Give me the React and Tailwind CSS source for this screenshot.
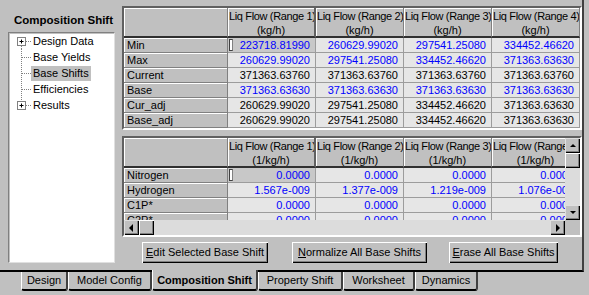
import React from 'react';

const topRows = [
  { label: 'Min', blue: true, focus: true, values: ['223718.81990', '260629.99020', '297541.25080', '334452.46620'] },
  { label: 'Max', blue: true, values: ['260629.99020', '297541.25080', '334452.46620', '371363.63630'] },
  { label: 'Current', blue: false, values: ['371363.63760', '371363.63760', '371363.63760', '371363.63760'] },
  { label: 'Base', blue: true, values: ['371363.63630', '371363.63630', '371363.63630', '371363.63630'] },
  { label: 'Cur_adj', blue: false, values: ['260629.99020', '297541.25080', '334452.46620', '371363.63630'] },
  { label: 'Base_adj', blue: false, values: ['260629.99020', '297541.25080', '334452.46620', '371363.63630'] },
];

const bottomRows = [
  { label: 'Nitrogen', blue: true, focus: true, values: ['0.0000', '0.0000', '0.0000', '0.0000'] },
  { label: 'Hydrogen', blue: true, values: ['1.567e-009', '1.377e-009', '1.219e-009', '1.076e-009'] },
  { label: 'C1P*', blue: true, values: ['0.0000', '0.0000', '0.0000', '0.0000'] },
  { label: 'C2P*', blue: true, values: ['0.0000', '0.0000', '0.0000', '0.0000'] },
];

const treeItems = [
  { label: 'Design Data', kind: 'first' },
  { label: 'Base Yields', kind: 'mid' },
  { label: 'Base Shifts', kind: 'mid', selected: true },
  { label: 'Efficiencies', kind: 'mid' },
  { label: 'Results', kind: 'last' },
];

const tabs = [
  { label: 'Design', w: 'w-[47px]' },
  { label: 'Model Config', w: 'w-[84px]' },
  { label: 'Composition Shift', w: 'w-[106px]', active: true },
  { label: 'Property Shift', w: 'w-[85px]' },
  { label: 'Worksheet', w: 'w-[72px]' },
  { label: 'Dynamics', w: 'w-[63px]' },
];

const TreeConnector = ({ kind }) => (
  <svg width="22" height="16" viewBox="0 0 22 16" className="shrink-0">
    <g stroke="#808080" strokeWidth="1" strokeDasharray="1 1" fill="none">
      {kind === 'first' && <line x1="12.5" y1="13" x2="12.5" y2="16" />}
      {kind === 'mid' && <line x1="12.5" y1="0" x2="12.5" y2="16" />}
      {kind === 'last' && <line x1="12.5" y1="0" x2="12.5" y2="4" />}
      {kind === 'mid'
        ? <line x1="13" y1="8.5" x2="22" y2="8.5" />
        : <line x1="17" y1="8.5" x2="22" y2="8.5" />}
    </g>
    {kind !== 'mid' && (
      <g>
        <rect x="8.5" y="4.5" width="8" height="8" fill="#fff" stroke="#808080" />
        <line x1="10.5" y1="8.5" x2="14.5" y2="8.5" stroke="#000" />
        <line x1="12.5" y1="6.5" x2="12.5" y2="10.5" stroke="#000" />
      </g>
    )}
  </svg>
);

const Arrow = ({ dir }) => {
  const pts = {
    up: '1,5 4,2 7,5',
    down: '1,2 4,5 7,2',
    left: '5,0 1,4 5,8',
    right: '2,0 6,4 2,8',
  }[dir];
  return (
    <svg width="8" height="8" viewBox="0 0 8 8">
      <polygon points={pts} fill="#000" />
    </svg>
  );
};

const ScrollBtn = ({ dir, className = '' }) => (
  <div className={`w-[15px] h-[15px] shrink-0 bg-[#c0c0c0] flex items-center justify-center shadow-[inset_1px_1px_0_#dfdfdf,inset_-1px_-1px_0_#000,inset_-2px_-2px_0_#808080] ${className}`}>
    <Arrow dir={dir} />
  </div>
);

const GridHeader = ({ unit }) => (
  <div className="flex h-[30px] shrink-0">
    <div className="w-[104px] shrink-0 bg-[#c0c0c0] border-r border-r-[#808080] border-b-2 border-b-[#303030] shadow-[inset_1px_1px_0_#fff]" />
    {[1, 2, 3, 4].map((n) => (
      <div
        key={n}
        className={`w-[88px] shrink-0 bg-[#c0c0c0] border-b-2 border-b-[#303030] overflow-hidden shadow-[inset_1px_1px_0_#fff] ${n === 1 ? 'border-r-2 border-r-[#606060]' : 'border-r border-r-[#808080]'}`}
      >
        <div className="whitespace-nowrap overflow-hidden leading-[14px] pt-[1px] pl-[1px] tracking-[-0.35px]">Liq Flow (Range {n})</div>
        <div className="text-center leading-[14px] whitespace-nowrap">{unit}</div>
      </div>
    ))}
  </div>
);

const GridRow = ({ row }) => (
  <div className="flex h-[15px] shrink-0">
    <div className="w-[104px] shrink-0 bg-[#c0c0c0] border-r border-b border-[#808080] shadow-[inset_1px_1px_0_#fff] pl-[3px] leading-[14px] whitespace-nowrap">
      {row.label}
    </div>
    {row.values.map((v, i) => (
      <div
        key={i}
        className={`relative w-[88px] shrink-0 border-r border-b border-[#9c9c9c] text-right pr-[5px] leading-[14px] whitespace-nowrap ${row.focus && i === 0 ? 'bg-[#c8c8c8]' : 'bg-[#e6e6e6]'} ${row.blue ? 'text-[#0000ff]' : 'text-black'}`}
      >
        {row.focus && i === 0 && (
          <span className="absolute left-[1px] top-[1px] w-[4px] h-[12px] border border-[#404040] border-r-[#808080] bg-white" />
        )}
        {v}
      </div>
    ))}
  </div>
);

const sunken = 'border-2 border-t-[#606060] border-l-[#606060] border-r-white border-b-white';
const raisedBtn = 'bg-[#c0c0c0] shadow-[inset_1px_1px_0_#fff,inset_-1px_-1px_0_#000,inset_-2px_-2px_0_#808080]';

const Button = ({ hot, rest, className }) => (
  <div className={`h-[21px] shrink-0 flex items-center justify-center whitespace-nowrap ${raisedBtn} ${className}`}>
    <span className="underline underline-offset-[1px]">{hot}</span>
    <span>{rest}</span>
  </div>
);

export default function App() {
  return (
    <div className="w-[589px] h-[295px] bg-[#c0c0c0] overflow-hidden font-['Liberation_Sans',Arial,sans-serif] text-[11px] text-black">
      <div className="flex w-[584px] h-[272px] border-r-2 border-b-2 border-r-[#404040] border-b-black">
        {/* left: tree */}
        <div className="w-[122px] shrink-0 flex flex-col">
          <div className="pl-[14px] pt-[12px] h-[32px] font-bold text-[11.5px] leading-[16px] whitespace-nowrap">
            Composition Shift
          </div>
          <div className="ml-[8px] w-[107px] h-[231px] bg-white border border-[#808080] border-r-[#e0e0e0] border-b-[#e0e0e0] shadow-[inset_1px_1px_0_#c0c0c0]">
            {treeItems.map((t) => (
              <div key={t.label} className="flex h-[16px] items-center">
                <TreeConnector kind={t.kind} />
                <span className={`px-[2px] leading-[15px] whitespace-nowrap ${t.selected ? 'bg-[#c0c0c0]' : ''}`}>
                  {t.label}
                </span>
              </div>
            ))}
          </div>
        </div>

        {/* right: grids */}
        <div className="w-[460px] shrink-0 flex flex-col">
          <div className={`mt-[6px] w-[460px] h-[124px] overflow-hidden ${sunken}`}>
            <GridHeader unit="(kg/h)" />
            {topRows.map((r) => (
              <GridRow key={r.label} row={r} />
            ))}
          </div>

          <div className={`mt-[6px] w-[460px] h-[101px] flex flex-col ${sunken}`}>
            <div className="flex h-[82px]">
              <div className="w-[441px] h-[82px] overflow-hidden">
                <div className="w-[456px]">
                  <GridHeader unit="(1/kg/h)" />
                  {bottomRows.map((r) => (
                    <GridRow key={r.label} row={r} />
                  ))}
                </div>
              </div>
              <div className="w-[15px] h-[82px] flex flex-col bg-[#dcdcdc]">
                <ScrollBtn dir="up" />
                <div className={`w-[15px] h-[15px] ${raisedBtn}`} />
                <div className="flex-1" />
                <ScrollBtn dir="down" />
              </div>
            </div>
            <div className="flex h-[15px]">
              <div className="w-[441px] flex bg-[#dcdcdc]">
                <ScrollBtn dir="left" />
                <div className={`w-[15px] h-[15px] ${raisedBtn}`} />
                <div className="flex-1" />
                <ScrollBtn dir="right" />
              </div>
              <div className="w-[15px] h-[15px] bg-[#c0c0c0]" />
            </div>
          </div>

          <div className="mt-[5px] flex">
            <Button hot="E" rest="dit Selected Base Shift" className="ml-[20px] w-[126px]" />
            <Button hot="N" rest="ormalize All Base Shifts" className="ml-[24px] w-[135px]" />
            <Button hot="E" rest="rase All Base Shifts" className="ml-[22px] w-[109px]" />
          </div>
        </div>
      </div>

      {/* tabs */}
      <div className="flex pl-[21px] items-start">
        {tabs.map((t) => (
          <div
            key={t.label}
            className={`${t.w} shrink-0 flex items-center justify-center whitespace-nowrap bg-[#c0c0c0] border-l border-l-white border-r-2 border-r-[#404040] border-b-2 border-b-black rounded-b-[3px] ${t.active ? 'relative z-10 -mt-[2px] h-[21px] font-bold pt-[2px]' : 'h-[19px]'}`}
          >
            {t.label}
          </div>
        ))}
      </div>
    </div>
  );
}
